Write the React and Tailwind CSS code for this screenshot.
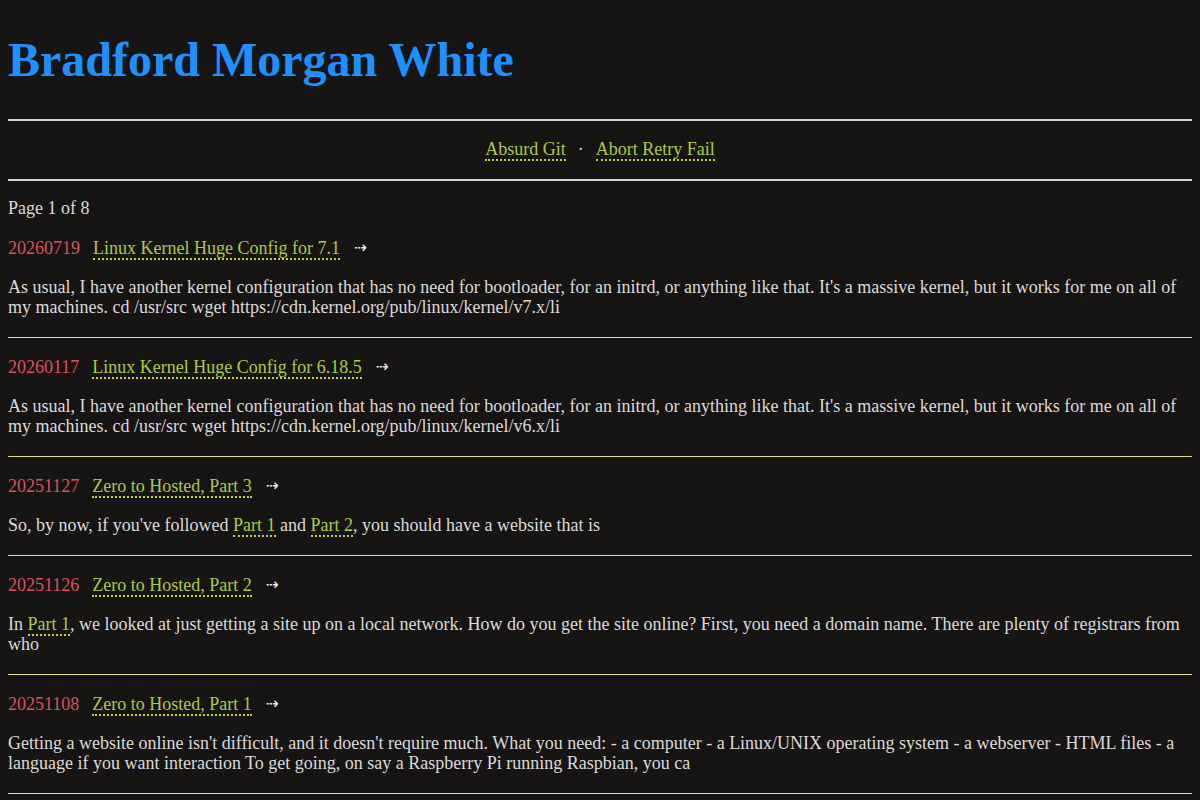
import React from "react";

const posts = [
  {
    date: "20260719",
    title: "Linux Kernel Huge Config for 7.1",
    body: [
      "As usual, I have another kernel configuration that has no need for bootloader, for an initrd, or anything like that. It's a massive kernel, but it works for me on all of my machines. cd /usr/src wget https://cdn.kernel.org/pub/linux/kernel/v7.x/li",
    ],
  },
  {
    date: "20260117",
    title: "Linux Kernel Huge Config for 6.18.5",
    body: [
      "As usual, I have another kernel configuration that has no need for bootloader, for an initrd, or anything like that. It's a massive kernel, but it works for me on all of my machines. cd /usr/src wget https://cdn.kernel.org/pub/linux/kernel/v6.x/li",
    ],
  },
  {
    date: "20251127",
    title: "Zero to Hosted, Part 3",
    body: [
      "So, by now, if you've followed ",
      { link: "Part 1" },
      " and ",
      { link: "Part 2" },
      ", you should have a website that is",
    ],
  },
  {
    date: "20251126",
    title: "Zero to Hosted, Part 2",
    body: [
      "In ",
      { link: "Part 1" },
      ", we looked at just getting a site up on a local network. How do you get the site online? First, you need a domain name. There are plenty of registrars from who",
    ],
  },
  {
    date: "20251108",
    title: "Zero to Hosted, Part 1",
    body: [
      "Getting a website online isn't difficult, and it doesn't require much. What you need: - a computer - a Linux/UNIX operating system - a webserver - HTML files - a language if you want interaction To get going, on say a Raspberry Pi running Raspbian, you ca",
    ],
  },
];

function Link({ children }) {
  return (
    <a
      href="#"
      className="text-[#aacb48] border-b-2 border-dotted border-[#c2d23c] no-underline"
    >
      {children}
    </a>
  );
}

export default function App() {
  return (
    <div
      className="min-h-[800px] bg-[#171414] text-[#dcdada] px-2 text-[18px] leading-[20px]"
      style={{ fontFamily: '"Liberation Serif", "Times New Roman", serif' }}
    >
      <h1 className="pt-[32px] mb-[31px] text-[48px] leading-[56px] font-bold text-[#1e90ff]">
        Bradford Morgan White
      </h1>
      <div className="h-[2px] bg-[#d6d6d6]" />
      <nav className="pt-[18px] pb-[18px] flex justify-center items-start gap-[12px]">
        <Link>Absurd Git</Link>
        <span className="text-[#dcdada]">·</span>
        <Link>Abort Retry Fail</Link>
      </nav>
      <div className="h-[2px] bg-[#d6d6d6]" />
      <div className="mt-[17px]">Page 1 of 8</div>
      <div className="mt-[20px]">
        {posts.map((p, i) => (
          <div key={i}>
            {i > 0 && <div className="h-[19px]" />}
            <div className="flex items-start gap-[13px]">
              <span className="text-[#d9525c]">{p.date}</span>
              <Link>{p.title}</Link>
              <span
                className="text-[#f0f0f0] text-[16px] ml-[1px]"
                style={{ fontFamily: '"DejaVu Sans", sans-serif' }}
              >
                ⇢
              </span>
            </div>
            <p className="mt-[17px]">
              {p.body.map((b, j) =>
                typeof b === "string" ? (
                  <React.Fragment key={j}>{b}</React.Fragment>
                ) : (
                  <Link key={j}>{b.link}</Link>
                )
              )}
            </p>
            <div className="mt-[20px] h-[1px] bg-[#e4e08e]" />
          </div>
        ))}
      </div>
    </div>
  );
}
